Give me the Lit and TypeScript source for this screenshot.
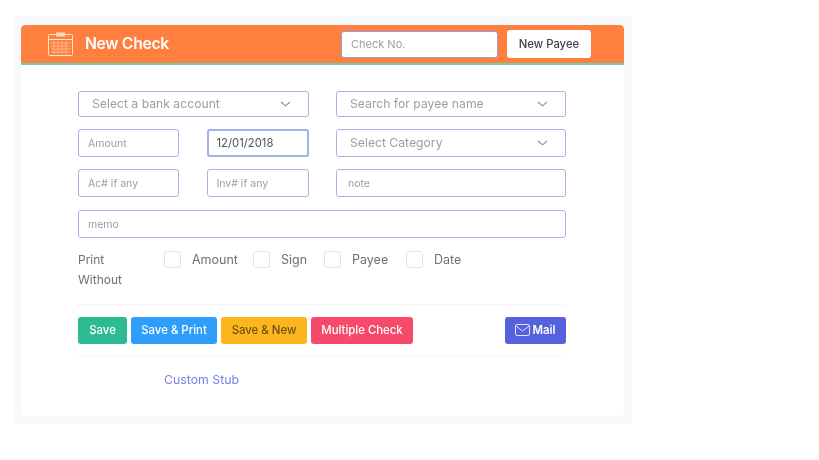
import { LitElement, html, css, svg } from "lit";
import { customElement } from "lit/decorators.js";

const chevron = svg`<svg class="chev" width="11" height="6" viewBox="0 0 11 6" fill="none" stroke="#8a8f99" stroke-width="1.1"><path d="M1 1l4.5 3.8L10 1"/></svg>`;

@customElement("app-root")
export class AppRoot extends LitElement {
  static styles = css`
    :host { display: block; width: 819px; height: 460px; background: #fff; overflow: hidden; font-family: "Inter", "Liberation Sans", sans-serif; }
    .page { width: 618px; height: 408px; margin: 16px 0 0 14px; padding: 9px 8px 8px 7px; box-sizing: border-box; background: #f8f9fd; filter: blur(0.6px); }
    .card { height: 391px; background: #fff; border-radius: 4px; overflow: hidden; }
    .head { height: 40px; box-sizing: border-box; background: #ff7f3f; border-bottom: 2px solid #6fd0a8; display: flex; align-items: center; padding: 0 33px 0 27px; border-radius: 4px 4px 0 0; }
    .title { margin: 0 0 2px 12px; color: #fff; font-size: 15.7px; font-weight: 600; letter-spacing: -0.3px; flex: 1; }
    .checkno { width: 157px; height: 27px; box-sizing: border-box; background: #fff; border: 1.5px solid #8f9ede; border-radius: 3px; padding-left: 9px; display: flex; align-items: center; color: #9a9ea6; font-size: 11px; }
    .payee { margin-left: 9px; width: 84px; height: 28px; background: #fff; border-radius: 3px; display: flex; align-items: center; justify-content: center; color: #3d4450; font-size: 11.3px; font-weight: 500; }
    .form { padding: 26px 58px 0 57px; }
    .grid { display: grid; grid-template-columns: 101px 102px 230px; column-gap: 27.5px; row-gap: 12px; }
    .field { height: 28px; box-sizing: border-box; border: 1.5px solid #a7b4e6; border-radius: 3px; display: flex; align-items: center; padding: 0 9px; color: #9a9ea6; font-size: 10.5px; background: #fff; }
    .select { height: 26px; font-size: 12.2px; padding: 0 17px 1px 13px; justify-content: space-between; }
    .wide { grid-column: 1 / 3; }
    .cat { font-size: 12.2px; padding: 0 17px 1px 13px; justify-content: space-between; }
    .date { color: #4f545d; font-size: 11.3px; border-width: 2px; border-color: #a3b1ea; padding-left: 8px; }
    .note { padding-left: 11px; }
    .full { grid-column: 1 / 4; margin-top: 1px; }
    .checks { display: grid; grid-template-columns: 86px 89px 71px 82px auto; margin-top: 12px; height: 54px; font-size: 12.5px; color: #6c7079; line-height: 20px; }
    .lbl { font-size: 12px; }
    .cb { width: 17px; height: 17px; box-sizing: border-box; border: 1.5px solid #dfe3f0; border-radius: 3px; margin: 1px 11px 0 0; }
    .opt { display: flex; }
    .rule { border-top: 1px dotted #eceef4; }
    .btns { display: flex; gap: 4px; align-items: center; margin: 12px 0 12px; }
    .b { height: 27px; padding-bottom: 2px; border-radius: 3px; color: #fff; font-size: 11.4px; font-weight: 500; display: flex; align-items: center; justify-content: center; box-sizing: border-box; }
    .save { width: 49px; background: #2dbb94; }
    .print { width: 86px; background: #2f9dfa; }
    .new { width: 86px; background: #fdb51e; color: #6b5410; }
    .multi { width: 102px; background: #f74a6b; }
    .mail { width: 61px; margin-left: auto; background: #5661dd; gap: 2px; font-weight: 600; }
    .stub { margin: 15px 0 0 86px; color: #7c80e8; font-size: 12.3px; }
  `;

  render() {
    return html`<div class="page"><div class="card">
      <div class="head">
        <svg width="25" height="24" viewBox="0 0 25 24" fill="none" stroke="#ffe6d2" stroke-width="1">
          <rect x="0.5" y="2.5" width="24" height="21" rx="1"/>
          <path d="M0.5 7.5h24"/>
          <rect x="8" y="0.5" width="9" height="4" fill="#ffd9bd" stroke="none"/>
          <path d="M3 11h19M3 14h19M3 17h19M3 20h19M6 9v13M10 9v13M14 9v13M18 9v13" stroke="#ffc8a0" stroke-width="0.7"/>
        </svg>
        <div class="title">New Check</div>
        <div class="checkno">Check No.</div>
        <div class="payee">New Payee</div>
      </div>
      <div class="form">
        <div class="grid">
          <div class="field select wide">Select a bank account ${chevron}</div>
          <div class="field select">Search for payee name ${chevron}</div>
          <div class="field">Amount</div>
          <div class="field date">12/01/2018</div>
          <div class="field cat">Select Category ${chevron}</div>
          <div class="field">Ac# if any</div>
          <div class="field">Inv# if any</div>
          <div class="field note">note</div>
          <div class="field full">memo</div>
        </div>
        <div class="checks">
          <div class="lbl">Print<br />Without</div>
          <div class="opt"><div class="cb"></div>Amount</div>
          <div class="opt"><div class="cb"></div>Sign</div>
          <div class="opt"><div class="cb"></div>Payee</div>
          <div class="opt"><div class="cb"></div>Date</div>
        </div>
        <div class="rule"></div>
        <div class="btns">
          <div class="b save">Save</div>
          <div class="b print">Save &amp; Print</div>
          <div class="b new">Save &amp; New</div>
          <div class="b multi">Multiple Check</div>
          <div class="b mail">
            <svg width="15" height="12" viewBox="0 0 15 12" fill="none" stroke="#dfe2ff" stroke-width="1"><rect x="0.5" y="0.5" width="14" height="11" rx="1.5"/><path d="M1 2l6.5 5L14 2"/></svg>
            Mail
          </div>
        </div>
        <div class="rule"></div>
        <div class="stub">Custom Stub</div>
      </div>
    </div></div>`;
  }
}
